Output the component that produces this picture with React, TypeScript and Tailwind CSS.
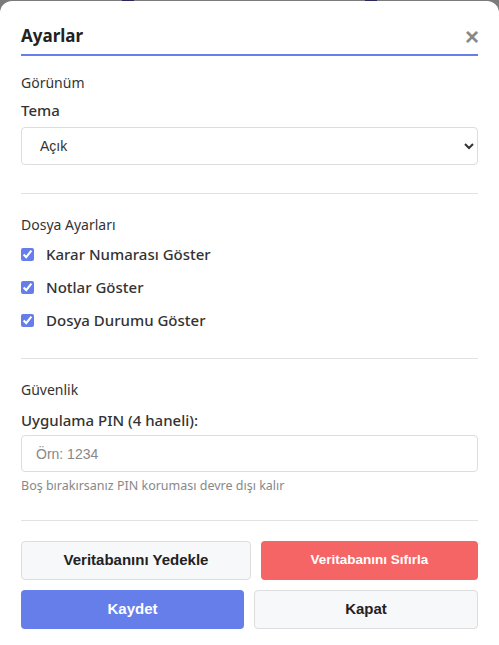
import React from "react";

const body = { fontFamily: '"Segoe UI", "Noto Sans", sans-serif' };
const arial = { fontFamily: '"Liberation Sans", Arial, sans-serif' };

function Check({ label }: { label: string }) {
  return (
    <label className="flex h-[20px] items-center">
      <input
        type="checkbox"
        defaultChecked
        className="m-0 h-[13px] w-[13px] accent-[#667eea]"
      />
      <span className="ml-[12px] text-[15px] font-medium text-[#333]">{label}</span>
    </label>
  );
}

export default function App() {
  return (
    <div className="relative h-[645px] w-[499px] overflow-hidden bg-[#7b7b7b]" style={body}>
      <div className="absolute left-[122px] top-0 h-[1px] w-[12px] bg-[#2a2a5a]" />
      <div className="absolute left-[365px] top-0 h-[1px] w-[12px] bg-[#2a2a5a]" />
      <div className="mt-[1px] flex h-[660px] w-[499px] flex-col rounded-[12px] bg-white px-[21px] pt-[21px]">
        <div className="flex items-center justify-between border-b-2 border-[#667eea] pb-[5px]">
          <h2 className="text-[17px] font-bold leading-[27px] text-[#222]">Ayarlar</h2>
          <span className="mr-[-1px] mt-[2px] text-[24px] font-bold leading-[20px] text-[#888]" style={arial}>
            ×
          </span>
        </div>

        <div className="mt-[17px] text-[14px] leading-[20px] text-[#333]">Görünüm</div>
        <div className="mt-[7px] text-[15px] font-medium leading-[20px] text-[#333]">Tema</div>
        <select
          className="mt-[7px] h-[38px] w-full rounded-[4px] border border-[#ddd] pl-[14px] pr-[8px] text-[14px] text-[#333]"
          style={arial}
          defaultValue="light"
        >
          <option value="light">Açık</option>
          <option value="dark">Koyu</option>
        </select>

        <div className="mt-[28px] h-px bg-[#e2e2e2]" />

        <div className="mt-[21px] text-[14px] leading-[20px] text-[#333]">Dosya Ayarları</div>
        <div className="mt-[9px] flex flex-col gap-[13px]">
          <Check label="Karar Numarası Göster" />
          <Check label="Notlar Göster" />
          <Check label="Dosya Durumu Göster" />
        </div>

        <div className="mt-[28px] h-px bg-[#e2e2e2]" />

        <div className="mt-[21px] text-[14px] leading-[20px] text-[#333]">Güvenlik</div>
        <div className="mt-[10px] text-[15px] font-medium leading-[20px] text-[#333]">
          Uygulama PIN (4 haneli):
        </div>
        <input
          type="text"
          placeholder="Örn: 1234"
          className="mt-[5px] h-[37px] w-full rounded-[4px] border border-[#ddd] px-[14px] text-[14px] text-[#333] placeholder:text-[#888]"
          style={arial}
        />
        <div className="mt-[5px] text-[12.5px] leading-[18px] text-[#888]">
          Boş bırakırsanız PIN koruması devre dışı kalır
        </div>

        <div className="mt-[25px] h-px bg-[#e2e2e2]" />

        <div className="mt-[20px] flex gap-[10px]">
          <button
            className="h-[39px] w-[230px] rounded-[4px] border border-[#ddd] bg-[#f7f8fa] text-[15px] font-bold text-[#222]"
            style={arial}
          >
            Veritabanını Yedekle
          </button>
          <button
            className="h-[39px] flex-1 rounded-[4px] bg-[#f56565] text-[13.5px] font-bold text-white"
            style={arial}
          >
            Veritabanını Sıfırla
          </button>
        </div>
        <div className="mt-[10px] flex gap-[10px]">
          <button
            className="h-[39px] w-[223px] rounded-[4px] bg-[#667eea] text-[15px] font-bold text-white"
            style={arial}
          >
            Kaydet
          </button>
          <button
            className="h-[39px] flex-1 rounded-[4px] border border-[#ddd] bg-[#f7f8fa] text-[15px] font-bold text-[#222]"
            style={arial}
          >
            Kapat
          </button>
        </div>
      </div>
    </div>
  );
}
